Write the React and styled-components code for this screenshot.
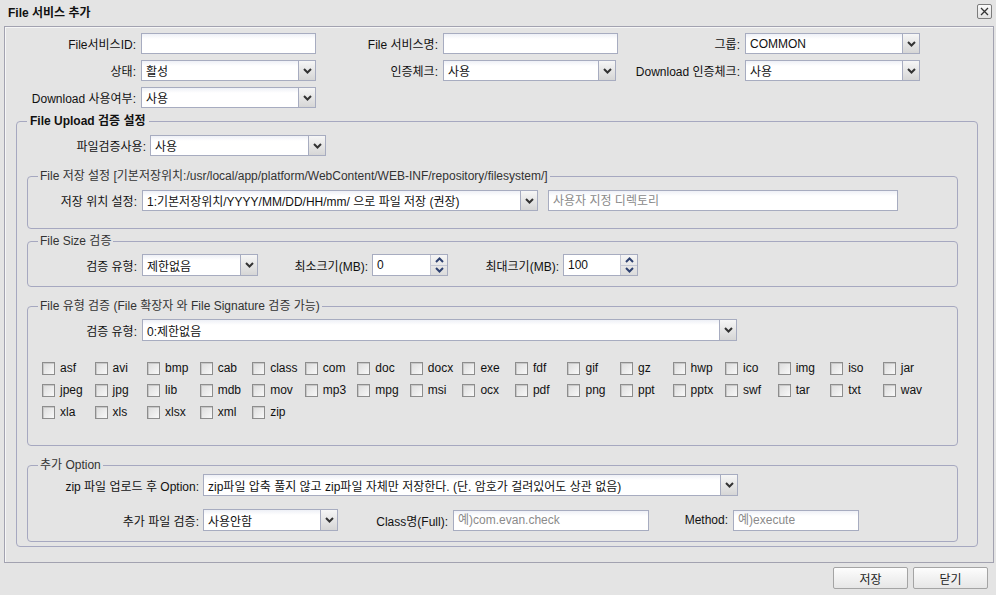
import React from "react";
import styled, { createGlobalStyle } from "styled-components";

const GlobalStyle = createGlobalStyle`
  html, body {
    margin: 0;
    padding: 0;
    background: #e4e4e4;
  }
  body {
    font-family: "Liberation Sans", "Noto Sans CJK KR", sans-serif;
    font-size: 12px;
    color: #111;
  }
`;

const Window = styled.div`
  width: 996px;
  height: 595px;
  background: #e4e4e4;
  display: flex;
  flex-direction: column;
  box-sizing: border-box;
`;

const TitleBar = styled.div`
  height: 26px;
  display: flex;
  align-items: center;
  justify-content: space-between;
  padding: 0 4px 4px 8px;
  box-sizing: border-box;
  font-weight: bold;
  font-size: 12px;
`;

const CloseButton = styled.div`
  width: 13px;
  height: 13px;
  border: 1px solid #7c7c7c;
  border-radius: 2px;
  background: linear-gradient(#fafafa, #e2e2e2);
  display: flex;
  align-items: center;
  justify-content: center;
`;

const Panel = styled.div`
  margin: 0 2px 0 4px;
  height: 537px;
  box-sizing: border-box;
  border: 1px solid #a2a2b0;
  box-shadow: inset 1px 1px 0 #f6f6f6;
  padding-top: 6px;
`;

const TopGrid = styled.div`
  display: grid;
  grid-template-columns: 136px 175px 127px 175px 127px 175px;
  grid-auto-rows: 21px;
  row-gap: 6px;
  align-items: center;
`;

const Label = styled.label`
  box-sizing: border-box;
  width: ${(p) => (p.$w ? `${p.$w}px` : "auto")};
  flex: none;
  text-align: right;
  padding-right: ${(p) => p.$pr ?? 5}px;
  white-space: nowrap;
`;

const TextInput = styled.input`
  box-sizing: border-box;
  width: ${(p) => (p.$w ? `${p.$w}px` : "100%")};
  height: 21px;
  border: 1px solid #a7acc0;
  background: linear-gradient(#eef0f6, #ffffff 5px);
  font: inherit;
  font-size: 12px;
  padding: 0 4px;
  margin: 0;
  outline: none;
  &::placeholder {
    color: #8a8a8a;
  }
`;

const SelectBox = styled.div`
  box-sizing: border-box;
  width: ${(p) => (p.$w ? `${p.$w}px` : "100%")};
  height: ${(p) => p.$h ?? 21}px;
  border: 1px solid #a7acc0;
  background: linear-gradient(#eef0f6, #ffffff 5px);
  display: flex;
  align-items: stretch;
  flex: none;
`;

const SelectValue = styled.div`
  flex: 1;
  display: flex;
  align-items: center;
  padding-left: 4px;
  white-space: nowrap;
  overflow: hidden;
`;

const SelectArrow = styled.div`
  width: 16px;
  border-left: 1px solid #a7acc0;
  background: linear-gradient(#f6f6f6, #d6d6d6);
  display: flex;
  align-items: center;
  justify-content: center;
`;

const Chevron = ({ up, color = "#333" }) => (
  <svg width="9" height="6" viewBox="0 0 9 6">
    <path
      d={up ? "M1 5 L4.5 1.5 L8 5" : "M1 1 L4.5 4.5 L8 1"}
      fill="none"
      stroke={color}
      strokeWidth="2"
    />
  </svg>
);

const Select = ({ value, w, h }) => (
  <SelectBox $w={w} $h={h}>
    <SelectValue>{value}</SelectValue>
    <SelectArrow>
      <Chevron />
    </SelectArrow>
  </SelectBox>
);

const SpinBox = styled.div`
  box-sizing: border-box;
  width: ${(p) => p.$w}px;
  height: 22px;
  border: 1px solid #a7acc0;
  background: #fff;
  display: flex;
  flex: none;
`;

const SpinButtons = styled.div`
  width: 16px;
  border-left: 1px solid #c4c7d4;
  display: flex;
  flex-direction: column;
  background: linear-gradient(#f5f5f5, #dcdcdc);
`;

const SpinHalf = styled.div`
  flex: 1;
  display: flex;
  align-items: center;
  justify-content: center;
  & + & {
    border-top: 1px solid #c4c7d4;
  }
`;

const Spinner = ({ value, w }) => (
  <SpinBox $w={w}>
    <SelectValue>{value}</SelectValue>
    <SpinButtons>
      <SpinHalf>
        <Chevron up color="#2e4170" />
      </SpinHalf>
      <SpinHalf>
        <Chevron color="#2e4170" />
      </SpinHalf>
    </SpinButtons>
  </SpinBox>
);

const Fieldset = styled.fieldset`
  margin: ${(p) => p.$m};
  padding: ${(p) => p.$p};
  border: 1px solid #a6a8c0;
  border-radius: 4px;
  min-width: 0;
`;

const Legend = styled.legend`
  font-size: 12px;
  line-height: 14px;
  font-weight: ${(p) => (p.$bold ? "bold" : "normal")};
  color: ${(p) => (p.$bold ? "#111" : "#333")};
  padding: 0 ${(p) => (p.$bold ? 3 : 2)}px;
  margin-left: ${(p) => p.$ml ?? 0}px;
`;

const Row = styled.div`
  display: flex;
  align-items: center;
  margin-top: ${(p) => p.$mt ?? 0}px;
`;

const Gap = styled.div`
  width: ${(p) => p.$w}px;
  flex: none;
`;

const CheckGrid = styled.div`
  display: grid;
  grid-template-columns: repeat(17, 52.56px);
  grid-auto-rows: 22px;
  padding-left: 14px;
  margin-top: 16px;
`;

const CheckItem = styled.label`
  display: flex;
  align-items: center;
  gap: 5px;
  white-space: nowrap;
`;

const CheckBox = styled.span`
  width: 11px;
  height: 11px;
  border: 1px solid #8d8d8d;
  background: linear-gradient(135deg, #dcdcdc, #f8f8f8);
  box-shadow: inset 1px 1px 0 #c8c8c8;
  flex: none;
`;

const Footer = styled.div`
  display: flex;
  justify-content: flex-end;
  gap: 5px;
  padding: 4px 8px 0 0;
`;

const Button = styled.button`
  width: 75px;
  height: 22px;
  border: 1px solid #a4a4a4;
  border-radius: 2px;
  background: linear-gradient(#fdfdfd, #e6e6e6);
  font: inherit;
  font-size: 12px;
  color: #222;
  padding: 0;
`;

const extensions = [
  "asf", "avi", "bmp", "cab", "class", "com", "doc", "docx", "exe", "fdf", "gif", "gz", "hwp", "ico", "img", "iso", "jar",
  "jpeg", "jpg", "lib", "mdb", "mov", "mp3", "mpg", "msi", "ocx", "pdf", "png", "ppt", "pptx", "swf", "tar", "txt", "wav",
  "xla", "xls", "xlsx", "xml", "zip",
];

export default function App() {
  return (
    <Window>
      <GlobalStyle />
      <TitleBar>
        <span>File 서비스 추가</span>
        <CloseButton>
          <svg width="9" height="9" viewBox="0 0 9 9">
            <path d="M1 1 L8 8 M8 1 L1 8" stroke="#333" strokeWidth="1.3" />
          </svg>
        </CloseButton>
      </TitleBar>

      <Panel>
        <TopGrid>
          <Label>File서비스ID:</Label>
          <TextInput />
          <Label>File 서비스명:</Label>
          <TextInput />
          <Label>그룹:</Label>
          <Select value="COMMON" />

          <Label>상태:</Label>
          <Select value="활성" />
          <Label>인증체크:</Label>
          <Select value="사용" w={173} />
          <Label>Download 인증체크:</Label>
          <Select value="사용" />

          <Label>Download 사용여부:</Label>
          <Select value="사용" />
        </TopGrid>

        <Fieldset $m="6px 15px 0 11px" $p="0 19px 4px 10px">
          <Legend $bold>File Upload 검증 설정</Legend>
          <Row $mt={7}>
            <Label $w={123} $pr={4}>파일검증사용:</Label>
            <Select value="사용" w={176} />
          </Row>

          <Fieldset $m="13px 0 0 0" $p="7px 0 17px 0">
            <Legend $ml={10}>
              File 저장 설정 [기본저장위치:/usr/local/app/platform/WebContent/WEB-INF/repository/filesystem/]
            </Legend>
            <Row>
              <Label $w={114}>저장 위치 설정:</Label>
              <Select value="1:기본저장위치/YYYY/MM/DD/HH/mm/ 으로 파일 저장 (권장)" w={396} />
              <Gap $w={10} />
              <TextInput $w={350} placeholder="사용자 지정 디렉토리" />
            </Row>
          </Fieldset>

          <Fieldset $m="5px 0 0 0" $p="6px 0 10px 0">
            <Legend $ml={10}>File Size 검증</Legend>
            <Row>
              <Label $w={114}>검증 유형:</Label>
              <Select value="제한없음" w={116} h={22} />
              <Label $w={114} $pr={4}>최소크기(MB):</Label>
              <Spinner value="0" w={76} />
              <Label $w={115} $pr={4}>최대크기(MB):</Label>
              <Spinner value="100" w={75} />
            </Row>
          </Fieldset>

          <Fieldset $m="12px 0 0 0" $p="6px 0 22px 0">
            <Legend $ml={10}>File 유형 검증 (File 확장자 와 File Signature 검증 가능)</Legend>
            <Row>
              <Label $w={114}>검증 유형:</Label>
              <Select value="0:제한없음" w={595} h={22} />
            </Row>
            <CheckGrid>
              {extensions.map((ext) => (
                <CheckItem key={ext}>
                  <CheckBox />
                  {ext}
                </CheckItem>
              ))}
            </CheckGrid>
          </Fieldset>

          <Fieldset $m="12px 0 0 0" $p="2px 0 10px 0">
            <Legend $ml={10}>추가 Option</Legend>
            <Row>
              <Label $w={175} $pr={4}>zip 파일 업로드 후 Option:</Label>
              <Select
                value="zip파일 압축 풀지 않고 zip파일 자체만 저장한다. (단. 암호가 걸려있어도 상관 없음)"
                w={535}
                h={22}
              />
            </Row>
            <Row $mt={13}>
              <Label $w={175} $pr={4}>추가 파일 검증:</Label>
              <Select value="사용안함" w={135} h={22} />
              <Label $w={115}>Class명(Full):</Label>
              <TextInput $w={196} placeholder="예)com.evan.check" />
              <Label $w={84}>Method:</Label>
              <TextInput $w={126} placeholder="예)execute" />
            </Row>
          </Fieldset>
        </Fieldset>
      </Panel>

      <Footer>
        <Button>저장</Button>
        <Button>닫기</Button>
      </Footer>
    </Window>
  );
}
